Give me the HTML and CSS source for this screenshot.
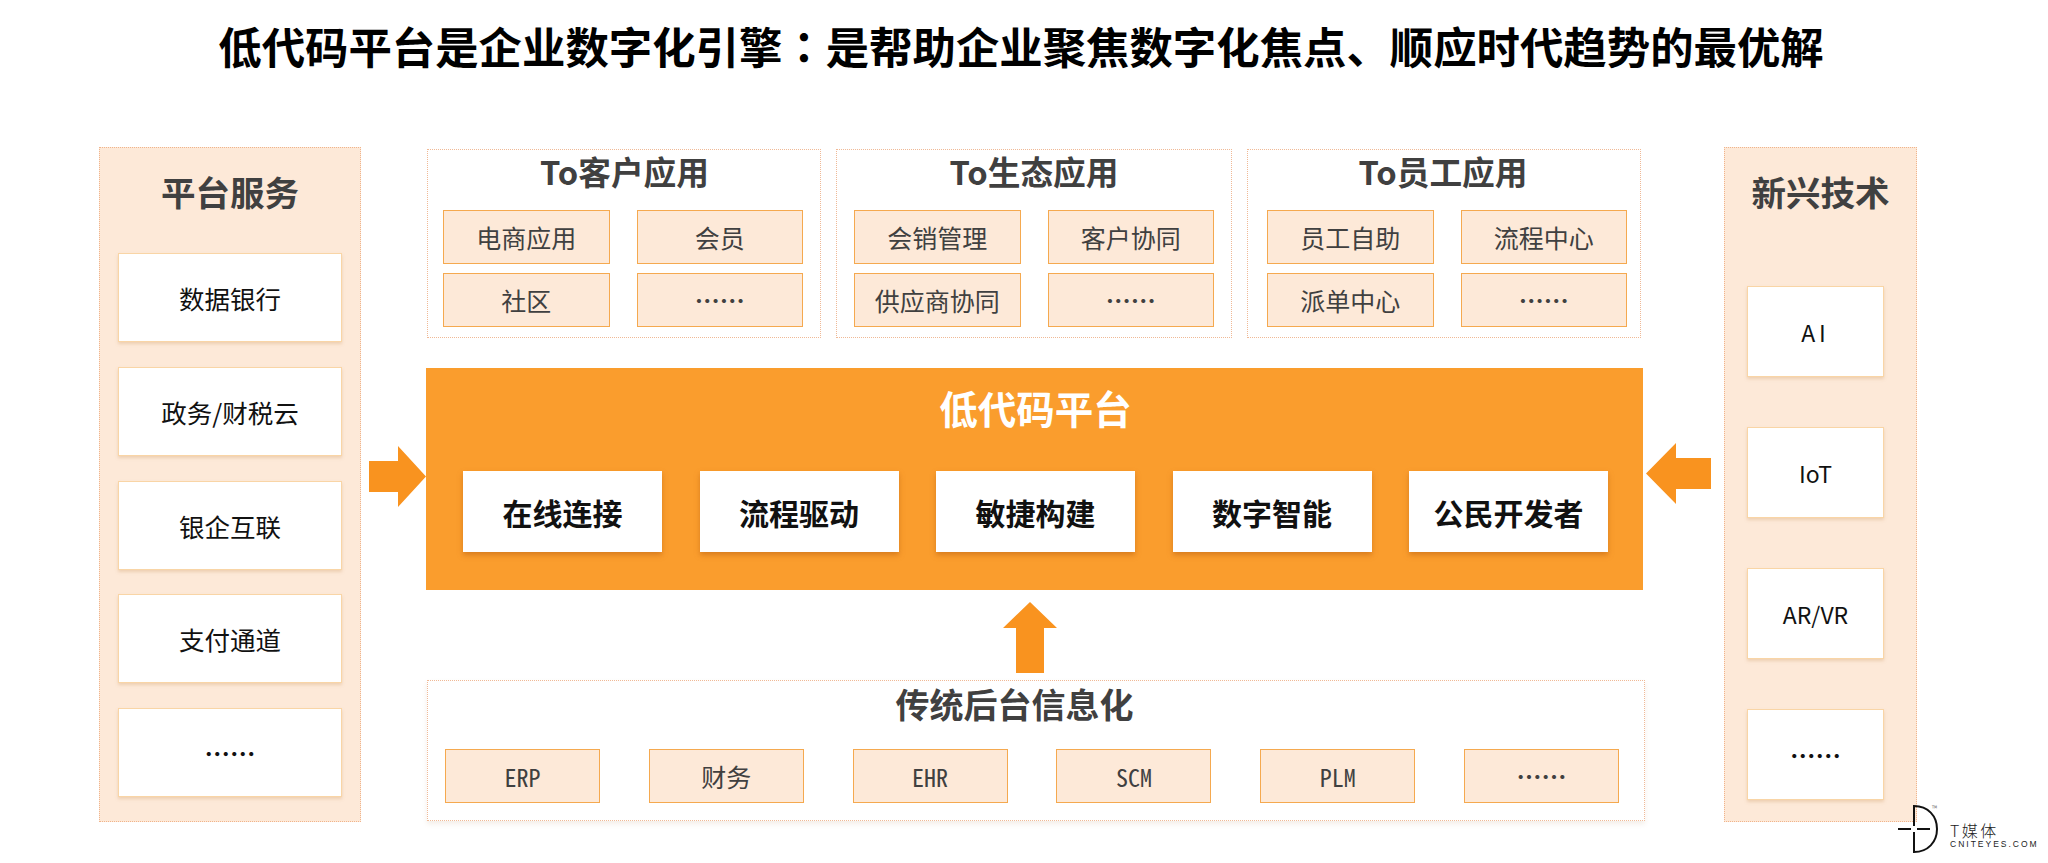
FILE: index.html
```html
<!DOCTYPE html>
<html lang="zh-CN">
<head>
<meta charset="utf-8">
<title>低代码平台</title>
<link rel="stylesheet" href="styles.css">
</head>
<body>
<div class="page">
  <h1 class="title">低代码平台是企业数字化引擎<span class="colon" lang="zh-TW">：</span>是帮助企业聚焦数字化焦点、顺应时代趋势的最优解</h1>
  <div class="board">
    <section class="side side-left">
      <h2 class="side-title">平台服务</h2>
      <div class="side-list">
        <div class="side-item">数据银行</div>
        <div class="side-item">政务/财税云</div>
        <div class="side-item">银企互联</div>
        <div class="side-item">支付通道</div>
        <div class="side-item dots">……</div>
      </div>
    </section>
    <div class="slot slot-left">
      <svg class="arrow-h" width="57" height="61" viewBox="0 0 57 61"><path d="M0 15H29V0L57 30.500L29 61V46H0Z" fill="#f9931f"/></svg>
    </div>
    <main class="center">
      <div class="apps">
        <section class="app">
          <h3 class="group-title">To客户应用</h3>
          <div class="app-grid">
            <div class="cell">电商应用</div><div class="cell">会员</div>
            <div class="cell">社区</div><div class="cell dots">……</div>
          </div>
        </section>
        <section class="app">
          <h3 class="group-title">To生态应用</h3>
          <div class="app-grid">
            <div class="cell">会销管理</div><div class="cell">客户协同</div>
            <div class="cell">供应商协同</div><div class="cell dots">……</div>
          </div>
        </section>
        <section class="app">
          <h3 class="group-title">To员工应用</h3>
          <div class="app-grid">
            <div class="cell">员工自助</div><div class="cell">流程中心</div>
            <div class="cell">派单中心</div><div class="cell dots">……</div>
          </div>
        </section>
      </div>
      <section class="core">
        <h2 class="core-title">低代码平台</h2>
        <div class="core-row">
          <div class="core-card">在线连接</div>
          <div class="core-card">流程驱动</div>
          <div class="core-card">敏捷构建</div>
          <div class="core-card">数字智能</div>
          <div class="core-card">公民开发者</div>
        </div>
      </section>
      <svg class="arrow-up" width="54" height="71" viewBox="0 0 54 71"><path d="M27 0L54 26H41V71H13V26H0Z" fill="#f9931f"/></svg>
      <section class="legacy">
        <h3 class="group-title legacy-title">传统后台信息化</h3>
        <div class="legacy-row">
          <div class="cell latin">ERP</div>
          <div class="cell">财务</div>
          <div class="cell latin">EHR</div>
          <div class="cell latin">SCM</div>
          <div class="cell latin">PLM</div>
          <div class="cell dots">……</div>
        </div>
      </section>
    </main>
    <div class="slot slot-right">
      <svg class="arrow-h" width="65" height="61" viewBox="0 0 65 61"><path d="M65 15H30V0L0 30.500L30 61V46H65Z" fill="#f9931f"/></svg>
    </div>
    <section class="side side-right">
      <h2 class="side-title">新兴技术</h2>
      <div class="side-list">
        <div class="side-item tech tech-wide">AI</div>
        <div class="side-item tech">IoT</div>
        <div class="side-item tech">AR/VR</div>
        <div class="side-item dots">……</div>
      </div>
    </section>
  </div>
  <div class="logo">
    <svg class="logo-mark" width="44" height="50" viewBox="0 0 44 50">
      <path d="M18 2C32 2 41 12 41 25C41 38 32 48 18 48Z" fill="none" stroke="#111" stroke-width="2"/>
      <path d="M2 25H15M21 25H34" stroke="#111" stroke-width="2"/>
      <path d="M18 22V28" stroke="#fff" stroke-width="3"/>
    </svg>
    <span class="logo-tm">™</span>
    <div class="logo-text">
      <div class="logo-cn">T媒体</div>
      <div class="logo-en">CNITEYES.COM</div>
    </div>
  </div>
</div>
</body>
</html>
```
FILE: styles.css
```css
* { box-sizing: border-box; }
html, body { margin: 0; padding: 0; background: #fff; }
body { font-family: "Noto Sans CJK SC", "Liberation Sans", sans-serif; color: #404040; }
.page { position: relative; width: 2048px; height: 863px; overflow: hidden; }
.title { margin: 0; height: 147px; padding: 15px 6px 0 0; font-size: 43.400px; line-height: 60px; font-weight: 700; color: #000; text-align: center; white-space: nowrap; }
.colon { font-family: "Noto Sans CJK TC", "Noto Sans CJK SC", sans-serif; }
.board { display: flex; align-items: flex-start; padding-left: 99px; }
.side { height: 675px; background: #fde9d8; border: 1px dotted #f0b48c; }
.side-left { width: 262px; padding: 0 18px; }
.side-right { width: 193px; padding: 0 32px 0 22px; }
.side-title { margin: 0; font-size: 34.500px; line-height: 48px; padding-top: 19px; font-weight: 700; text-align: center; color: #404040; }
.side-right .side-title { margin: 0 -32px 0 -22px; }
.side-list { display: flex; flex-direction: column; }
.side-left .side-list { padding-top: 38px; gap: 24.750px; }
.side-right .side-list { padding-top: 71px; gap: 50px; }
.side-item { display: flex; align-items: center; justify-content: center; background: #fff; border: 1px solid #f9d5a6; box-shadow: 0 2px 3px rgba(210,160,110,.35); font-size: 25.500px; color: #111; }
.side-left .side-item { height: 89px; }
.side-right .side-item { height: 91px; }
.tech { font-size: 23px; }
.tech-wide { letter-spacing: 4px; }
.slot { flex: none; height: 1px; }
.slot-left { width: 64px; padding: 299px 0 0 8px; }
.slot-right { width: 79px; padding: 296px 0 0 1px; }
.arrow-h, .arrow-up { display: block; }
.center { width: 1220px; display: flex; flex-direction: column; }
.apps { display: flex; gap: 15px; margin-top: 2px; padding: 0 4px 0 2px; }
.app { flex: 1; height: 189px; padding: 0 17px 0 15px; background: #fff; border: 1px dotted #f0b996; }
.app:nth-child(2) { padding: 0 17px 0 17px; }
.app:nth-child(3) { padding: 0 13px 0 19px; }
.group-title { margin: 0; font-size: 32.700px; line-height: 46px; font-weight: 700; text-align: center; color: #404040; }
.app .group-title { height: 60px; margin-top: -2px; margin-bottom: 2px; }
.app:nth-child(1) .group-title { padding-left: 3px; }
.app:nth-child(3) .group-title { padding-right: 8px; }
.app-grid { display: grid; grid-template-columns: 1fr 1fr; column-gap: 27px; row-gap: 9px; }
.cell { display: flex; align-items: center; justify-content: center; height: 54px; background: #fde9d8; border: 1px solid #f5a94f; font-size: 25px; color: #404040; }
.dots { font-weight: 700; }
.core { margin: 30px 2px 0 1px; height: 222px; background: #fa9d2d; padding: 0 35px 0 37px; display: flex; flex-direction: column; }
.core-title { margin: 0; height: 103px; padding-top: 12px; font-size: 38.500px; line-height: 54px; font-weight: 700; color: #fff; text-align: center; }
.core-row { display: flex; justify-content: space-between; }
.core-card { width: 199px; height: 81px; display: flex; align-items: center; justify-content: center; background: #fff; box-shadow: 0 3px 5px rgba(190,100,20,.55); font-size: 30px; font-weight: 700; color: #111; }
.arrow-up { margin: 12px 0 0 578px; }
.legacy { margin: 7px 0 0 2px; height: 141px; padding: 0 25px 0 17px; background: #fff; border: 1px dotted #f0b996; box-shadow: 0 3px 5px rgba(200,170,140,.2); }
.legacy-title { height: 68px; margin-top: 0; margin-bottom: 0; padding-right: 35px; font-size: 34px; }
.legacy-row { display: flex; justify-content: space-between; }
.legacy-row .cell { width: 155px; }
.latin { font-family: "Noto Sans Mono CJK SC", "Liberation Mono", monospace; font-size: 24px; }
.logo { position: absolute; left: 1896px; top: 804px; display: flex; }
.logo-mark { display: block; }
.logo-tm { position: absolute; left: 36px; top: 0; font-size: 7px; line-height: 8px; color: #777; }
.logo-text { padding: 17px 0 0 10px; color: #222; }
.logo-cn { font-size: 16px; line-height: 18px; letter-spacing: 2.500px; font-weight: 300; }
.logo-en { font-family: "Liberation Sans", sans-serif; font-size: 8.500px; line-height: 11px; letter-spacing: 2px; }
```
